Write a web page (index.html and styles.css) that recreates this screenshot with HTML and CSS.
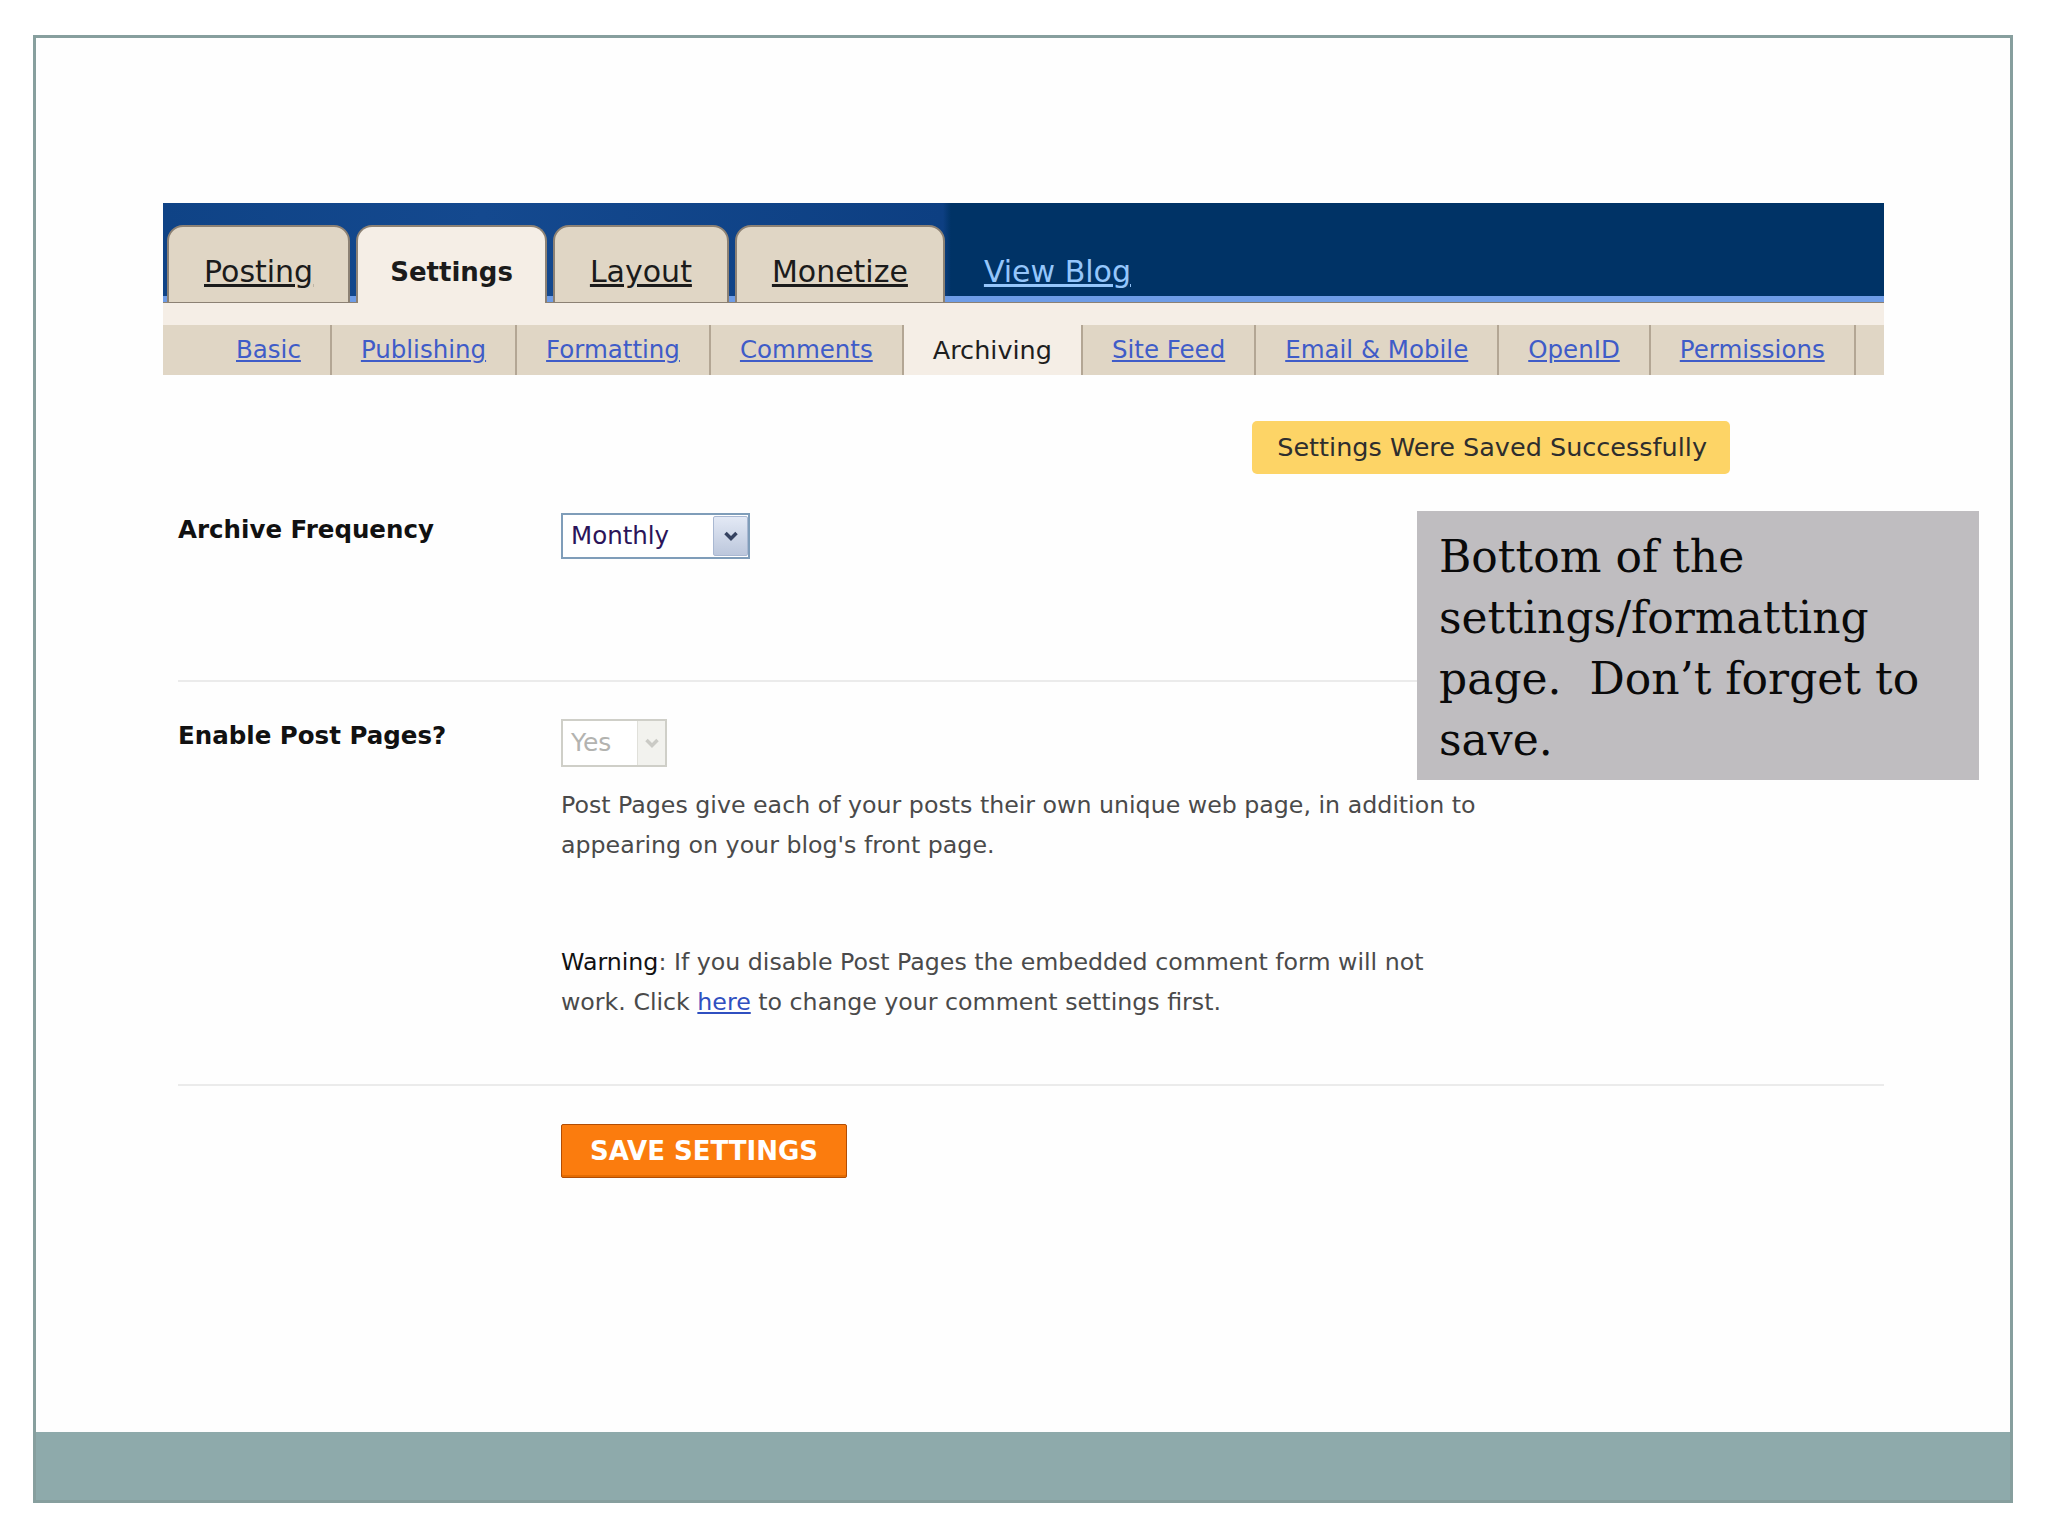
FILE: index.html
```html
<!DOCTYPE html>
<html lang="en">
<head>
<meta charset="utf-8">
<title>Blogger Settings - Archiving</title>
<link rel="stylesheet" href="styles.css">
</head>
<body>
<div class="slide">
  <div class="slide-body">
    <div class="shot">
      <div class="topbar">
        <a class="tab">Posting</a>
        <a class="tab active">Settings</a>
        <a class="tab">Layout</a>
        <a class="tab">Monetize</a>
        <a class="viewblog">View Blog</a>
      </div>
      <div class="band"></div>
      <nav class="subtabs">
        <a>Basic</a>
        <a>Publishing</a>
        <a>Formatting</a>
        <a>Comments</a>
        <a class="current">Archiving</a>
        <a>Site Feed</a>
        <a>Email &amp; Mobile</a>
        <a>OpenID</a>
        <a>Permissions</a>
      </nav>
      <div class="content">
        <div class="notice-row">
          <div class="notice">Settings Were Saved Successfully</div>
        </div>
        <div class="row row-archive">
          <div class="label">Archive Frequency</div>
          <div class="control">
            <div class="select">
              <span class="val">Monthly</span>
              <span class="btn"><svg width="16" height="12" viewBox="0 0 16 12"><polyline points="2.5,3 8,8.5 13.5,3" fill="none" stroke="#354260" stroke-width="3.5"/></svg></span>
            </div>
          </div>
        </div>
        <div class="row row-posts">
          <div class="label">Enable Post Pages?</div>
          <div class="control">
            <div class="select disabled">
              <span class="val">Yes</span>
              <span class="btn"><svg width="16" height="12" viewBox="0 0 16 12"><polyline points="2.5,3 8,8.5 13.5,3" fill="none" stroke="#cacac5" stroke-width="3.5"/></svg></span>
            </div>
            <p class="desc">Post Pages give each of your posts their own unique web page, in addition to<br>appearing on your blog's front page.</p>
            <p class="desc warning"><span class="strong">Warning</span>: If you disable Post Pages the embedded comment form will not<br>work. Click <a class="link">here</a> to change your comment settings first.</p>
          </div>
        </div>
        <div class="row row-save">
          <div></div>
          <div class="control">
            <button class="save">SAVE SETTINGS</button>
          </div>
        </div>
      </div>
    </div>
    <div class="note">Bottom of the<br>settings/formatting<br>page.&nbsp; Don’t forget to<br>save.</div>
  </div>
  <div class="footer"></div>
</div>
</body>
</html>
```
FILE: styles.css
```css
body {
  margin: 0;
  background: #ffffff;
  font-family: "DejaVu Sans", "Noto Sans", sans-serif;
}

.slide {
  box-sizing: border-box;
  width: 1980px;
  height: 1468px;
  margin: 35px 0 0 33px;
  border: 3px solid #879f9e;
  display: flex;
  flex-direction: column;
  background: #fefefe;
}

.slide-body {
  position: relative;
  flex: 1;
}

.footer {
  height: 68px;
  background: #8eaaab;
}

.shot {
  width: 1721px;
  margin: 165px 0 0 127px;
}

/* ---------- top tabs ---------- */
.topbar {
  box-sizing: border-box;
  height: 99px;
  border-bottom: 6px solid #6e9ce6;
  background: linear-gradient(90deg, #0f4386 0px, #14498f 320px, #0d3f82 780px, #003366 788px, #003366 100%);
  display: flex;
  align-items: flex-end;
  gap: 6px;
  padding-left: 4px;
}

.tab {
  position: relative;
  z-index: 1;
  box-sizing: border-box;
  height: 78px;
  margin-bottom: -7px;
  padding: 27px 35px 0;
  border: 2px solid #8c8174;
  border-bottom: 1px solid #8c8174;
  border-radius: 16px 16px 0 0;
  background: #e0d6c5;
  font-size: 30px;
  line-height: 36px;
  color: #1b1b1b;
  text-decoration: underline;
  white-space: nowrap;
}

.tab.active {
  padding: 27px 32px 0;
  background: #f5eee6;
  border-bottom: none;
  font-weight: bold;
  font-size: 26px;
  text-decoration: none;
}

.viewblog {
  box-sizing: border-box;
  height: 78px;
  margin: 0 0 -7px 33px;
  padding-top: 29px;
  font-size: 30px;
  line-height: 36px;
  color: #95c6fb;
  text-decoration: underline;
  white-space: nowrap;
}

.band {
  height: 22px;
  background: #f5eee6;
  border-top: 1px solid #8c8174;
}

/* ---------- sub tabs ---------- */
.subtabs {
  display: flex;
  height: 50px;
  background: #e0d6c5;
  padding-left: 44px;
}

.subtabs a {
  padding: 0 29px;
  border-right: 2px solid #b3a694;
  font-size: 24.5px;
  line-height: 50px;
  color: #3f5cc8;
  text-decoration: underline;
  white-space: nowrap;
}

.subtabs a.current {
  background: #f5eee6;
  color: #1e1e1e;
  text-decoration: none;
  font-size: 25.5px;
}

/* ---------- content ---------- */
.content {
  padding-left: 15px;
}

.notice-row {
  display: flex;
  justify-content: flex-end;
  padding: 46px 154px 0 0;
}

.notice {
  height: 53px;
  line-height: 53px;
  padding: 0 23px 0 25px;
  background: #fdd466;
  border-radius: 5px;
  font-size: 25.5px;
  color: #2e2e2e;
  white-space: nowrap;
}

.row {
  display: grid;
  grid-template-columns: 383px 1fr;
  border-bottom: 2px solid #ebebeb;
}

.row-archive {
  margin-top: 39px;
  padding-bottom: 121px;
}

.row-posts {
  padding: 37px 0 62px;
}

.row-save {
  padding-top: 38px;
  border-bottom: none;
}

.label {
  padding-top: 1.5px;
  font-weight: bold;
  font-size: 24.5px;
  line-height: 30px;
  color: #111111;
}

.select {
  box-sizing: border-box;
  width: 189px;
  height: 46px;
  border: 2px solid #7f9db9;
  background: #ffffff;
  display: flex;
}

.select .val {
  flex: 1;
  padding-left: 8px;
  font-size: 24.5px;
  line-height: 42px;
  color: #2b1459;
}

.select .btn {
  box-sizing: border-box;
  width: 35px;
  margin: 1px 0;
  border: 1px solid #a9b8d2;
  border-radius: 2px;
  background: linear-gradient(#e3e9f5, #bcc7dc);
  display: flex;
  align-items: center;
  justify-content: center;
}

.select.disabled {
  width: 106px;
  height: 48px;
  border-color: #cfcfc8;
}

.select.disabled .val {
  line-height: 44px;
  font-size: 25px;
  color: #b3b3b0;
}

.select.disabled .btn {
  width: 28px;
  margin: 0;
  border: none;
  border-left: 1px solid #e0e0da;
  border-radius: 0;
  background: #f2f2ee;
}

.desc {
  margin: 18px 0 0;
  font-size: 23.7px;
  line-height: 40px;
  color: #4a4a4a;
  white-space: nowrap;
}

.desc.warning {
  margin-top: 77px;
}

.strong {
  color: #111111;
}

.link {
  color: #2f4fc0;
  text-decoration: underline;
}

.save {
  box-sizing: border-box;
  width: 286px;
  height: 54px;
  padding: 0;
  border: 1px solid #b24d04;
  border-radius: 2px;
  background: #fb7c0e;
  box-shadow: inset 0 -2px 0 #e46c02;
  color: #ffffff;
  font-family: "DejaVu Sans", sans-serif;
  font-weight: bold;
  font-size: 26px;
  line-height: 52px;
}

/* ---------- overlay note ---------- */
.note {
  position: absolute;
  left: 1381px;
  top: 473px;
  box-sizing: border-box;
  width: 562px;
  height: 269px;
  padding: 15px 0 0 22px;
  background: #bfbdc0;
  font-family: "DejaVu Serif", "Liberation Serif", serif;
  font-size: 44px;
  line-height: 61px;
  color: #0a0a0a;
  white-space: nowrap;
}
```
